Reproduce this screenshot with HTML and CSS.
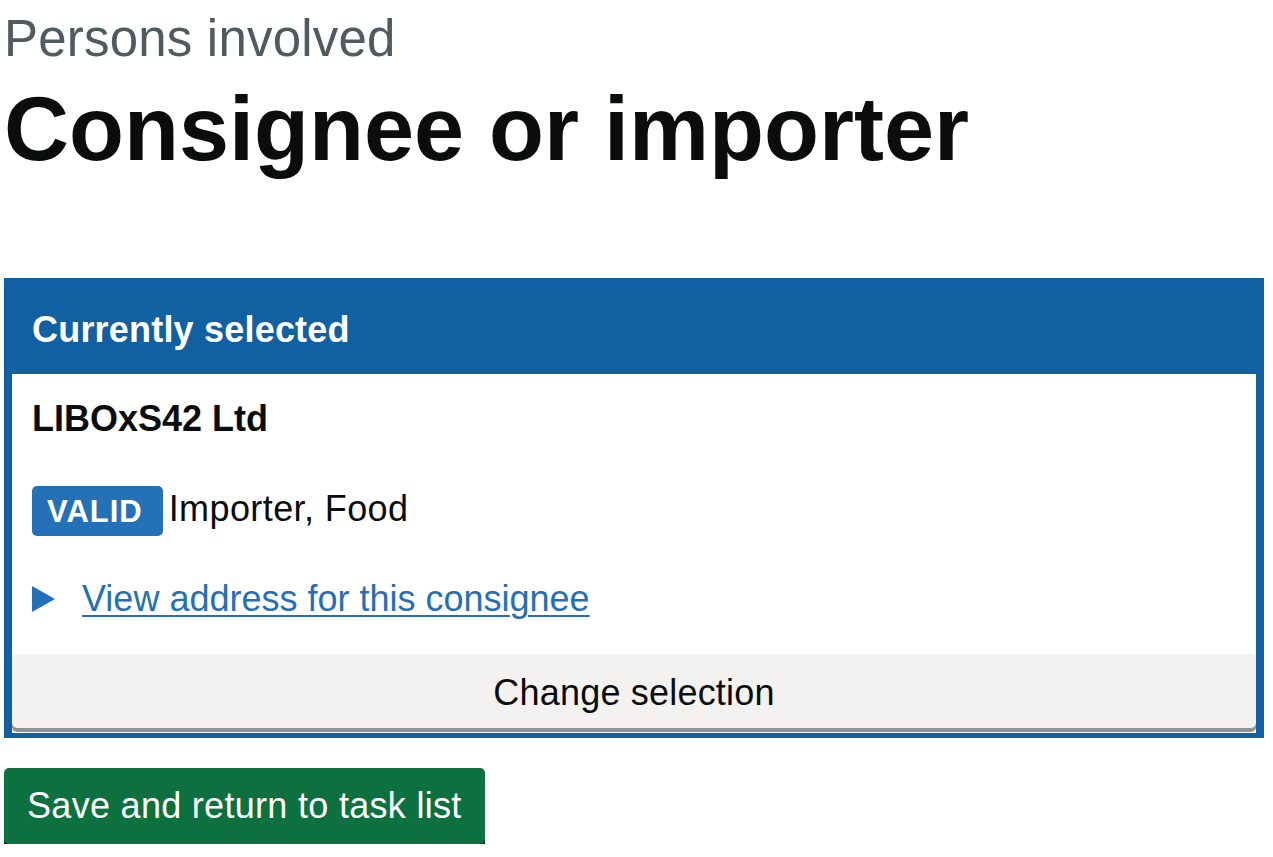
FILE: index.html
```html
<!DOCTYPE html>
<html lang="en">
<head>
<meta charset="utf-8">
<title>Consignee or importer</title>
<link rel="stylesheet" href="styles.css">
</head>
<body>
<main class="page">
  <span class="caption">Persons involved</span>
  <h1 class="heading">Consignee or importer</h1>

  <section class="panel">
    <h2 class="panel-title">Currently selected</h2>
    <div class="panel-body">
      <div class="panel-content">
        <p class="party-name">LIBOxS42 Ltd</p>
        <div class="status-row">
          <strong class="tag">VALID</strong>
          <span class="status-text">Importer, Food</span>
        </div>
        <div class="details">
          <svg class="details-arrow" viewBox="0 0 23 26" width="23" height="26" aria-hidden="true"><polygon points="0,0 23,13 0,26" fill="currentColor"/></svg>
          <a class="details-link" href="#">View address for this consignee</a>
        </div>
      </div>
      <button class="btn-secondary" type="button">Change selection</button>
    </div>
  </section>

  <button class="btn-primary" type="button">Save and return to task list</button>
</main>
</body>
</html>
```

FILE: styles.css
```css
html, body {
  margin: 0;
  padding: 0;
  background: #ffffff;
}

body {
  font-family: "Liberation Sans", Arial, sans-serif;
  color: #0b0c0c;
}

.page {
  padding: 9px 9px 0 4px;
  display: flex;
  flex-direction: column;
  align-items: flex-start;
}

.caption {
  display: block;
  font-size: 51px;
  line-height: 60px;
  font-weight: 400;
  color: #505a5f;
  letter-spacing: 0.2px;
}

.heading {
  margin: 10px 0 0;
  font-size: 90px;
  line-height: 100px;
  font-weight: 700;
  color: #0b0c0c;
}

.panel {
  align-self: stretch;
  margin-top: 99px;
  background: #1060a2;
  padding: 0 8px 5px;
}

.panel-title {
  margin: 0;
  padding: 32px 20px 24px;
  font-size: 36px;
  line-height: 40px;
  font-weight: 700;
  color: #ffffff;
  letter-spacing: 0.2px;
}

.panel-body {
  background: #ffffff;
  padding-top: 25px;
  display: flex;
  flex-direction: column;
}

.panel-content {
  padding: 0 20px;
}

.party-name {
  margin: 0;
  font-size: 36px;
  line-height: 40px;
  font-weight: 700;
}

.status-row {
  margin-top: 47px;
  display: flex;
  align-items: flex-start;
}

.tag {
  display: inline-block;
  box-sizing: border-box;
  height: 50px;
  padding: 1px 20px 0 15px;
  border-radius: 5px;
  background: #2571b8;
  color: #ffffff;
  font-size: 31px;
  line-height: 49px;
  font-weight: 700;
  letter-spacing: 1px;
  text-transform: uppercase;
}

.status-text {
  margin-left: 6px;
  font-size: 36px;
  line-height: 46px;
  letter-spacing: 0.4px;
}

.details {
  margin-top: 43px;
  display: flex;
  align-items: flex-start;
  gap: 27px;
  color: #2370b8;
}

.details-arrow {
  display: block;
  margin-top: 7px;
  flex: none;
}

.details-link {
  font-size: 36px;
  line-height: 40px;
  color: #2370b8;
  text-decoration: underline;
  text-decoration-thickness: 2px;
  text-underline-offset: 4px;
}

.btn-secondary {
  margin: 35px 0 5px;
  box-sizing: border-box;
  height: 74px;
  padding: 19px 20px 15px;
  border: 0;
  border-radius: 5px;
  background: #f3f2f1;
  box-shadow: 0 4px 0 #929191;
  color: #0b0c0c;
  font-family: inherit;
  font-size: 36px;
  line-height: 40px;
  letter-spacing: 0.2px;
  text-align: center;
}

.btn-primary {
  margin-top: 30px;
  box-sizing: border-box;
  height: 76px;
  padding: 18px 23px 18px;
  border: 0;
  border-radius: 5px;
  background: #0c713f;
  box-shadow: 0 4px 0 #002d18;
  color: #ffffff;
  font-family: inherit;
  font-size: 36px;
  line-height: 40px;
  letter-spacing: 0.3px;
}
```
